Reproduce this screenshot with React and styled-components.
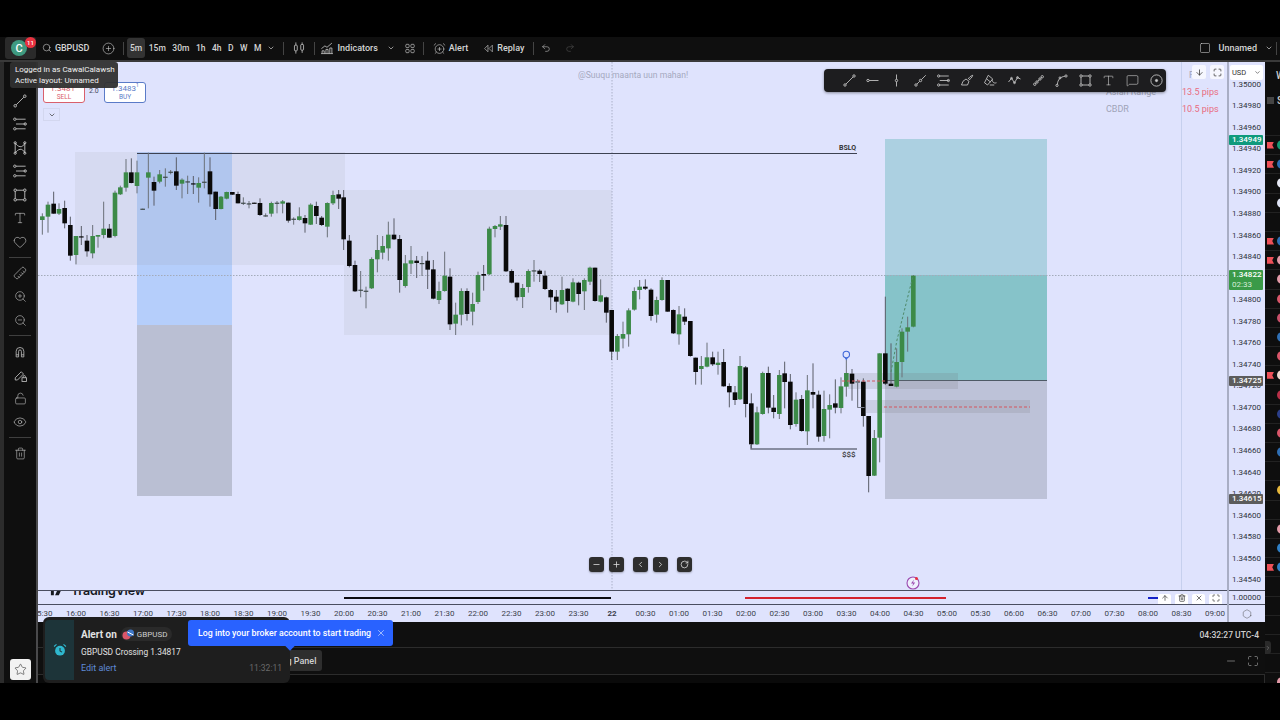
import styled, { createGlobalStyle } from "styled-components";
import {
  AlarmClockPlus,
  ChevronDown,
  ChevronLeft,
  ChevronRight,
  CirclePlus,
  Eye,
  Hexagon,
  Heart,
  LockOpen,
  Maximize,
  Minus,
  MessageSquare,
  Plus,
  Redo2,
  RotateCw,
  Ruler,
  Search,
  Square,
  Star,
  Trash2,
  Type,
  Undo2,
  X,
  ArrowDown,
  ArrowUp,
  ZoomIn,
  ZoomOut,
} from "lucide-react";

// candles read off the picture: [x, bodyTop, bodyBottom, wickTop, wickBottom, colour]
// every chunk is in 3x crop coordinates, with the crop's origin
const chunks = [
  {
    x0: 40,
    y0: 140,
    rows: [
      [7, 229, 240, 220, 284, "g"], [24, 194, 230, 185, 278, "g"], [41, 191, 221, 155, 221, "b"],
      [57, 207, 221, 190, 225, "g"], [74, 204, 250, 182, 265, "b"], [91, 255, 347, 230, 362, "b"],
      [108, 288, 345, 288, 373, "g"], [124, 289, 292, 258, 315, "b"], [141, 302, 334, 285, 350, "b"],
      [158, 288, 340, 255, 355, "g"], [174, 285, 290, 285, 323, "g"], [191, 266, 285, 185, 295, "g"],
      [208, 266, 293, 252, 293, "b"], [225, 158, 288, 152, 292, "g"], [241, 142, 163, 137, 165, "g"],
      [258, 97, 143, 57, 155, "g"], [274, 97, 129, 55, 130, "b"], [291, 97, 138, 62, 160, "g"],
      [308, 206, 208, 206, 208, "n"], [325, 97, 113, 38, 205, "g"], [342, 126, 152, 110, 197, "b"],
      [359, 103, 125, 90, 130, "g"], [376, 110, 112, 85, 140, "n"], [392, 95, 97, 90, 103, "n"],
      [409, 94, 137, 52, 150, "b"], [426, 119, 131, 115, 175, "g"], [443, 124, 126, 107, 162, "n"],
      [460, 130, 133, 108, 162, "b"], [476, 129, 143, 112, 188, "g"], [493, 125, 127, 38, 145, "n"],
      [510, 94, 163, 52, 200, "b"], [527, 155, 207, 155, 240, "b"], [543, 170, 207, 168, 208, "g"],
      [560, 156, 176, 155, 178, "g"], [577, 156, 164, 156, 165, "b"], [594, 162, 190, 155, 190, "b"],
      [610, 188, 190, 172, 195, "n"], [627, 190, 192, 183, 205, "n"], [643, 188, 190, 188, 190, "b"],
      [660, 189, 225, 175, 228, "b"], [677, 226, 228, 220, 230, "n"], [694, 189, 221, 185, 230, "g"],
      [711, 188, 190, 183, 220, "n"], [728, 184, 191, 180, 220, "g"], [745, 188, 242, 188, 248, "b"],
      [761, 236, 238, 232, 254, "n"], [778, 229, 240, 202, 242, "g"], [795, 234, 250, 225, 278, "b"],
      [812, 194, 254, 190, 255, "g"], [829, 198, 228, 185, 252, "b"], [845, 233, 255, 228, 258, "b"],
      [862, 189, 260, 187, 292, "g"], [879, 165, 190, 152, 195, "g"], [896, 163, 176, 150, 207, "b"],
    ],
  },
  {
    x0: 340,
    y0: 180,
    rows: [
      [11, 52, 178, 30, 210, "b"], [28, 182, 258, 165, 262, "b"], [45, 255, 334, 242, 336, "b"],
      [62, 329, 331, 273, 352, "n"], [78, 332, 334, 320, 385, "n"], [95, 237, 325, 232, 327, "g"],
      [112, 210, 238, 165, 277, "g"], [128, 198, 218, 168, 238, "g"], [145, 164, 205, 125, 242, "g"],
      [162, 164, 178, 115, 180, "b"], [179, 177, 300, 165, 338, "b"], [196, 250, 318, 225, 323, "g"],
      [213, 241, 251, 198, 282, "g"], [230, 242, 249, 228, 294, "b"], [246, 249, 251, 228, 288, "n"],
      [263, 242, 269, 215, 327, "b"], [280, 268, 356, 240, 358, "b"], [297, 333, 360, 305, 372, "g"],
      [314, 287, 333, 215, 335, "g"], [330, 290, 433, 265, 450, "b"], [347, 404, 431, 368, 465, "g"],
      [364, 333, 404, 325, 436, "g"], [381, 333, 402, 325, 422, "b"], [398, 372, 395, 338, 436, "g"],
      [414, 285, 366, 275, 372, "g"], [431, 282, 287, 255, 332, "b"], [448, 146, 283, 140, 285, "g"],
      [465, 138, 147, 135, 172, "g"], [481, 133, 140, 108, 150, "g"], [498, 135, 274, 108, 276, "b"],
      [515, 273, 308, 268, 310, "b"], [531, 308, 352, 308, 362, "b"], [548, 324, 351, 312, 384, "g"],
      [565, 273, 321, 268, 338, "g"], [582, 271, 273, 240, 305, "n"], [599, 272, 282, 268, 306, "b"],
      [615, 287, 327, 272, 330, "b"], [632, 330, 352, 327, 390, "b"], [649, 350, 365, 330, 398, "b"],
      [666, 330, 373, 290, 375, "g"], [683, 326, 363, 325, 398, "b"], [699, 307, 365, 295, 367, "g"],
      [716, 308, 342, 305, 376, "b"], [733, 300, 334, 295, 390, "g"], [750, 263, 305, 260, 315, "g"],
      [765, 263, 363, 263, 365, "b"], [782, 346, 365, 298, 367, "g"], [799, 352, 398, 350, 428, "b"],
      [815, 390, 515, 390, 540, "b"], [832, 468, 515, 462, 540, "g"], [849, 462, 476, 425, 505, "g"],
      [866, 391, 463, 385, 500, "g"], [883, 333, 389, 322, 392, "g"], [899, 320, 330, 300, 358, "g"],
      [916, 320, 326, 298, 330, "b"], [933, 329, 408, 325, 422, "b"], [950, 360, 404, 350, 428, "g"],
    ],
  },
  {
    x0: 640,
    y0: 270,
    rows: [
      [66, 30, 90, 22, 92, "g"], [83, 30, 125, 30, 125, "b"], [100, 120, 190, 118, 192, "b"],
      [117, 133, 193, 108, 224, "g"], [134, 140, 155, 115, 165, "b"], [151, 153, 258, 153, 260, "b"],
      [167, 263, 306, 263, 344, "b"], [184, 288, 297, 258, 344, "g"], [201, 262, 290, 218, 292, "g"],
      [218, 262, 283, 245, 288, "b"], [234, 278, 285, 245, 314, "g"], [251, 276, 349, 237, 350, "b"],
      [268, 348, 367, 340, 412, "b"], [285, 367, 390, 348, 405, "b"],
    ],
  },
  {
    x0: 740,
    y0: 260,
    rows: [
      [0, 318, 418, 288, 420, "g"], [17, 322, 432, 318, 472, "b"], [34, 430, 553, 400, 565, "b"],
      [51, 457, 553, 440, 555, "g"], [68, 339, 462, 335, 464, "g"], [85, 339, 443, 320, 460, "b"],
      [101, 443, 456, 405, 475, "b"], [118, 345, 462, 330, 477, "g"], [134, 340, 366, 305, 445, "b"],
      [151, 365, 495, 342, 508, "b"], [168, 419, 492, 397, 500, "g"], [185, 417, 513, 405, 515, "b"],
      [202, 391, 514, 345, 555, "g"], [219, 396, 404, 310, 445, "b"], [236, 404, 530, 392, 545, "b"],
      [252, 447, 528, 392, 545, "g"], [269, 435, 449, 403, 535, "g"], [286, 430, 443, 358, 460, "b"],
      [303, 379, 444, 352, 460, "g"], [319, 339, 380, 300, 410, "g"], [336, 341, 371, 327, 422, "b"],
      [353, 364, 366, 358, 442, "n"], [370, 365, 468, 355, 500, "b"], [386, 468, 648, 468, 697, "b"],
      [403, 534, 647, 510, 648, "g"], [419, 280, 533, 280, 607, "g"], [436, 280, 371, 110, 375, "b"],
      [453, 371, 378, 250, 378, "b"], [470, 306, 380, 265, 382, "g"], [486, 215, 306, 205, 352, "g"],
      [503, 202, 215, 170, 275, "g"], [520, 47, 200, 45, 202, "g"],
    ],
  },
];

const candles = chunks.flatMap(({ x0, y0, rows }) =>
  rows.map(([x, top, bottom, wTop, wBottom, kind]) => ({
    x: x0 + x / 3,
    top: y0 + top / 3,
    bottom: y0 + bottom / 3,
    wTop: y0 + wTop / 3,
    wBottom: y0 + wBottom / 3,
    kind,
  }))
);

const bodyColor = { g: "#3c8a48", b: "#0a0a0a", n: "#3f4a4a" };

// 1.34820 sits fully under the live price tag, its slot stays empty
const prices = [
  "1.35000", "1.34980", "1.34960", "1.34940", "1.34920", "1.34900", "1.34880", "1.34860",
  "1.34840", "", "1.34800", "1.34780", "1.34760", "1.34740", "1.34720", "1.34700",
  "1.34680", "1.34660", "1.34640", "1.34620", "1.34600", "1.34580", "1.34560", "1.34540",
];

const times = [
  "15:30", "16:00", "16:30", "17:00", "17:30", "18:00", "18:30", "19:00", "19:30", "20:00",
  "20:30", "21:00", "21:30", "22:00", "22:30", "23:00", "23:30", "22", "00:30", "01:00",
  "01:30", "02:00", "02:30", "03:00", "03:30", "04:00", "04:30", "05:00", "05:30", "06:00",
  "06:30", "07:00", "07:30", "08:00", "08:30", "09:00",
];

const watchRows = [
  { dot: "#159a74", flag: true }, { dot: "#2f6fb5", flag: true }, { dot: "#e8eaf5" },
  { dot: "#dfe4f5" }, { dot: null }, { dot: "#2f6fb5", flag: true },
  { dot: "#e39aa8", flag: true, active: true }, { dot: "#e39aa8" }, { dot: "#d9566a" },
  { dot: "#c9506a" }, { dot: "#2f6fb5" }, { dot: "#d9566a" },
  { dot: "#f0d8d0", flag: true }, { dot: "#b83048" }, { dot: "#2c3f8a" },
  { dot: "#d9566a" }, { dot: "#2f6fb5" }, { dot: null },
  { dot: "#e8b93c" }, { dot: null }, { dot: "#e39aa8" },
  { dot: "#2f7fc5" }, { dot: "#2f7fc5", flag: true }, { dot: null },
  { dot: null }, { dot: null }, { dot: null },
  { dot: null }, { dot: "#e39aa8" },
];

const GlobalStyle = createGlobalStyle`
  html, body {
    margin: 0;
    padding: 0;
    background: #000;
    font-family: Roboto, "Liberation Sans", sans-serif;
  }
  * {
    box-sizing: border-box;
  }
`;

const Page = styled.div`
  width: 1280px;
  height: 720px;
  background: #000;
  padding: 37px 0;
  display: flex;
  flex-direction: column;
  overflow: hidden;
  position: relative;
`;
const TopBar = styled.header`
  height: 25px;
  flex: none;
  background: #0f0f0f;
  border-bottom: 2px solid #3a3a3a;
  display: flex;
  align-items: center;
  padding: 0 0 1px 5px;
  color: #d4d4d4;
  font-size: 9px;
  font-weight: 500;
`;
const LogoButton = styled.div`
  width: 31px;
  height: 22px;
  background: #2a2a2a;
  border-radius: 3px;
  padding-left: 6px;
  display: flex;
  align-items: center;
  position: relative;
`;
const LogoCircle = styled.div`
  width: 16px;
  height: 16px;
  border-radius: 50%;
  background: #3f9a80;
  color: #fff;
  font-size: 11px;
  display: flex;
  align-items: center;
  justify-content: center;
`;
const Badge = styled.span`
  position: absolute;
  top: 0;
  right: 0;
  width: 11px;
  height: 11px;
  border-radius: 50%;
  background: #e8323f;
  color: #fff;
  font-size: 6px;
  display: flex;
  align-items: center;
  justify-content: center;
`;
const Symbol = styled.div`
  display: flex;
  align-items: center;
  gap: 3px;
  margin-left: 6px;
  width: 53px;
  font-size: 9px;
  letter-spacing: -0.1px;
`;
const IconCell = styled.div`
  width: ${(p) => p.$w || 22}px;
  display: flex;
  align-items: center;
  justify-content: center;
  flex: none;
  color: ${(p) => p.$color || "#cfcfcf"};
`;
const Divider = styled.span`
  width: 1px;
  height: 13px;
  background: #444;
  flex: none;
  margin-left: ${(p) => p.$gap ?? 4}px;
  margin-right: ${(p) => p.$after ?? p.$gap ?? 4}px;
`;
const TimeGroup = styled.div`
  display: flex;
  align-items: center;
  gap: 6.5px;
  font-size: 8.5px;
`;
const TimeButton = styled.span`
  ${(p) =>
    p.$active &&
    `
    background: #333;
    padding: 5px 3px;
    margin-right: -3px;
    border-radius: 3px;
  `}
`;
const TextButton = styled.div`
  display: flex;
  align-items: center;
  gap: 3px;
  margin-left: ${(p) => p.$before || 0}px;
  margin-right: ${(p) => p.$after || 0}px;
  flex: none;
`;
const TopRight = styled.div`
  margin-left: auto;
  display: flex;
  align-items: center;
`;

const Workspace = styled.div`
  flex: 1;
  display: flex;
  min-height: 0;
`;
const LeftBar = styled.aside`
  width: 38px;
  flex: none;
  background: #0f0f0f;
  border-left: 4px solid #2c2c2c;
  border-right: 2px solid #4a4a4c;
  padding-top: 27px;
  display: flex;
  flex-direction: column;
  align-items: center;
  color: #c4c4c4;
  position: relative;
`;
const LeftTool = styled.div`
  height: 23.5px;
  width: 100%;
  flex: none;
  display: flex;
  align-items: center;
  justify-content: center;
`;
const LeftDivider = styled.hr`
  width: 22px;
  border: 0;
  border-top: 1px solid #3f3f3f;
  margin: 3px 0 4px;
  flex: none;
`;
const TiltedRuler = styled(Ruler)`
  transform: rotate(90deg);
`;
const StarButton = styled.div`
  margin-top: auto;
  margin-bottom: 3px;
  width: 21px;
  height: 21px;
  border-radius: 3px;
  background: #f2f2f2;
  color: #333;
  display: flex;
  align-items: center;
  justify-content: center;
`;

const Center = styled.div`
  flex: 1;
  min-width: 0;
  display: flex;
  flex-direction: column;
`;
const ChartRow = styled.div`
  height: 560px;
  flex: none;
  display: flex;
`;
const ChartColumn = styled.div`
  width: 1189px;
  flex: none;
  display: flex;
  flex-direction: column;
  background: #dfe3fd;
`;
const MainPane = styled.div`
  height: 529px;
  flex: none;
  position: relative;
  overflow: hidden;
  border-bottom: 1px solid #4a4e60;
`;
const ChartSvg = styled.svg`
  display: block;
  width: 1189px;
  height: 528px;
`;
const Watermark = styled.div`
  position: absolute;
  top: 8px;
  left: 540px;
  font-size: 8.6px;
  color: #a5a9bf;
`;
const TradeBox = styled.div`
  position: absolute;
  top: 20px;
  left: ${(p) => p.$left}px;
  width: 42px;
  height: 21px;
  background: #fff;
  border: 1px solid ${(p) => p.$color};
  border-radius: 3px;
  color: ${(p) => p.$color};
  font-size: 8px;
  line-height: 9px;
  text-align: center;
  padding-top: 1px;
`;
const TradeSup = styled.sup`
  font-size: 5px;
  line-height: 0;
`;
const TradeSide = styled.div`
  font-size: 6.5px;
  line-height: 9px;
`;
const TradeQty = styled.div`
  position: absolute;
  top: 25px;
  left: 51px;
  font-size: 7px;
  color: #44485c;
`;
const MoreButton = styled.div`
  position: absolute;
  top: 46px;
  left: 5px;
  width: 17px;
  height: 13px;
  border: 1px solid #d3d7ef;
  color: #333;
  display: flex;
  align-items: center;
  justify-content: center;
`;
const LoginTip = styled.div`
  position: absolute;
  top: 62px;
  left: 10px;
  width: 108px;
  height: 26px;
  background: rgba(48, 48, 48, 0.95);
  color: #f0f0f0;
  border-radius: 3px;
  font-size: 8px;
  line-height: 11px;
  padding: 2px 5px;
  white-space: nowrap;
  z-index: 5;
`;
const DrawBar = styled.div`
  position: absolute;
  top: 7px;
  left: 786px;
  width: 342px;
  height: 23px;
  background: #1d1d1f;
  border-radius: 4px;
  box-shadow: 0 1px 3px rgba(0, 0, 0, 0.4);
  display: flex;
  align-items: center;
  padding-left: 13.5px;
  color: #cfcfcf;
  z-index: 3;
`;
const DrawTool = styled.div`
  width: 23.6px;
  flex: none;
  display: flex;
  justify-content: center;
`;
const Legend = styled.div`
  position: absolute;
  top: 21.5px;
  left: 1068px;
  display: grid;
  grid-template-columns: 76px auto;
  grid-auto-rows: 17px;
  align-items: center;
  font-size: 9px;
  color: #a0a4b8;
  white-space: nowrap;
`;
const Pips = styled.span`
  color: #e96c80;
`;
const CornerButton = styled.div`
  position: absolute;
  top: 3px;
  left: ${(p) => p.$left}px;
  width: 14px;
  height: 14px;
  border-radius: 2px;
  background: #f6f7ff;
  color: #333;
  display: flex;
  align-items: center;
  justify-content: center;
  z-index: 4;
`;
const FaintLetter = styled.span`
  position: absolute;
  top: 8px;
  left: 1151px;
  font-size: 9px;
  color: #9ea2b8;
`;
const ZoomBar = styled.div`
  position: absolute;
  top: 495px;
  left: 551px;
  display: flex;
  align-items: center;
  gap: 5px;
`;
const ZoomButton = styled.div`
  width: 15px;
  height: 15px;
  background: #2e2e2e;
  border-radius: 3px;
  color: #e4e4e4;
  display: flex;
  align-items: center;
  justify-content: center;
  margin-right: ${(p) => p.$after || 0}px;
  box-shadow: 0 1px 2px rgba(0, 0, 0, 0.3);
`;
const SubPane = styled.div`
  height: 14px;
  flex: none;
  position: relative;
  overflow: hidden;
  border-bottom: 1px solid #4a4e60;
`;
const Brand = styled.div`
  position: absolute;
  left: 10px;
  top: -9px;
  display: flex;
  align-items: center;
  gap: 8px;
  color: #16181f;
  font-family: Inter, Roboto, sans-serif;
  font-weight: 600;
  font-size: 12.5px;
  line-height: 18px;
  letter-spacing: -0.2px;
`;
const SubBar = styled.div`
  position: absolute;
  top: 5.5px;
  left: ${(p) => p.$left}px;
  width: ${(p) => p.$w}px;
  height: 2px;
  background: ${(p) => p.$color};
`;
const PaneControls = styled.div`
  position: absolute;
  top: 3px;
  left: 1120px;
  display: flex;
  gap: 4px;
  color: #333;
`;
const PaneControl = styled.div`
  width: 13px;
  height: 13px;
  background: #fff;
  border-radius: 2px;
  display: flex;
  align-items: flex-start;
  justify-content: center;
`;
const TimeAxis = styled.div`
  height: 17px;
  flex: none;
  display: flex;
  align-items: center;
  margin-left: -12.25px;
  overflow: hidden;
  font-size: 8px;
  color: #3b3f4c;
`;
const TimeLabel = styled.span`
  width: 33.5px;
  flex: none;
  text-align: center;
  font-weight: ${(p) => (p.$bold ? 700 : 400)};
`;
const PriceColumn = styled.div`
  width: 38px;
  flex: none;
  background: #dfe3fd;
  border-left: 2px solid #a9aec4;
  display: flex;
  flex-direction: column;
  font-size: 8px;
  color: #2f3340;
`;
const PriceMain = styled.div`
  height: 529px;
  flex: none;
  position: relative;
  overflow: hidden;
  padding-top: 11.7px;
  padding-left: 3px;
  border-bottom: 1px solid #4a4e60;
`;
const PriceLine = styled.div`
  height: 21.56px;
  line-height: 21.56px;
`;
const PriceTag = styled.div`
  position: absolute;
  left: 0;
  top: ${(p) => p.$top}px;
  width: 34px;
  background: ${(p) => p.$color};
  color: #fff;
  font-weight: 500;
  line-height: 10px;
  padding-left: 3px;
  border-radius: 1px;
`;
const TagTimer = styled.div`
  color: #d6ecd8;
  font-weight: 400;
  line-height: 10px;
`;
const UsdBox = styled.div`
  position: absolute;
  top: 3px;
  left: 1px;
  width: 33px;
  height: 15px;
  background: #fff;
  border-radius: 2px;
  display: flex;
  align-items: center;
  justify-content: space-between;
  padding: 0 2px;
  font-size: 7.5px;
  color: #333;
`;
const PriceSub = styled.div`
  height: 14px;
  flex: none;
  padding-left: 3px;
  line-height: 13px;
  border-bottom: 1px solid #4a4e60;
`;
const AxisCorner = styled.div`
  height: 17px;
  flex: none;
  display: flex;
  align-items: center;
  justify-content: center;
  color: #444;
`;
const StatusBar = styled.div`
  height: 26px;
  flex: none;
  background: #0f0f0f;
  border-bottom: 1px solid #2c2c2c;
  display: flex;
  align-items: center;
  justify-content: flex-end;
  padding-right: 6px;
  color: #cfcfcf;
  font-size: 8.5px;
  font-weight: 500;
`;
const PanelBar = styled.div`
  height: 26px;
  flex: none;
  background: #0f0f0f;
  display: flex;
  align-items: flex-start;
  padding-top: 2px;
  padding-left: 212px;
  color: #bbb;
`;
const PanelButton = styled.div`
  height: 21px;
  width: 72px;
  border-radius: 3px;
  background: #2e2e2e;
  color: #d0d0d0;
  font-size: 9px;
  font-weight: 500;
  display: flex;
  align-items: center;
  padding-left: 11px;
  white-space: nowrap;
`;
const PanelIcons = styled.div`
  margin-left: auto;
  padding: 5px 6px 0 0;
  display: flex;
  gap: 10px;
`;
const PanelBody = styled.div`
  flex: 1;
  background: #0a0a0a;
  border-top: 1px solid #2c2c2c;
  border-right: 1px solid #2c2c2c;
`;
const Sidebar = styled.aside`
  width: 15px;
  flex: none;
  background: #0e0e0e;
  overflow: hidden;
  font-size: 10px;
  font-weight: 500;
  color: #d0d0d0;
  position: relative;
`;
const CollapseTab = styled.div`
  position: absolute;
  left: 0;
  top: 579px;
  width: 6px;
  height: 13px;
  background: #2a2a2a;
  border-radius: 0 3px 3px 0;
  color: #999;
  display: flex;
  align-items: center;
  justify-content: center;
`;
const SideHead = styled.div`
  height: 74px;
  padding-top: 8px;
  display: flex;
  flex-direction: column;
  gap: 14px;
  border-bottom: 1px solid #222;
`;
const SideTitle = styled.div`
  display: flex;
  align-items: center;
  gap: 3px;
  padding-left: ${(p) => (p.$box ? 2 : 11)}px;
  line-height: 11px;
`;
const SideBox = styled.span`
  width: 7px;
  height: 7px;
  flex: none;
  background: #444;
`;
const WatchRow = styled.div`
  height: 19.2px;
  display: flex;
  align-items: center;
  gap: 3px;
  padding-left: ${(p) => (p.$flag ? 2 : 12)}px;
  border-bottom: 1px solid #222;
`;
const RowFlag = styled.span`
  width: 7px;
  height: 7px;
  flex: none;
  background: #ee5058;
  clip-path: polygon(0 0, 100% 0, 75% 50%, 100% 100%, 0 100%);
`;
const RowDot = styled.span`
  width: 10px;
  height: 10px;
  flex: none;
  border-radius: 50%;
  background: ${(p) => p.$color};
`;
const Toast = styled.div`
  position: absolute;
  left: 43px;
  top: 617px;
  width: 247px;
  height: 66px;
  background: #1e1e1e;
  border-radius: 6px;
  display: flex;
  color: #e2e2e2;
  font-size: 8.4px;
  z-index: 6;
`;
const ToastStrip = styled.div`
  width: 29px;
  margin: 3px 0 3px 2px;
  border-radius: 4px 0 0 4px;
  background: #1d3439;
  display: flex;
  align-items: center;
  justify-content: center;
  flex: none;
`;
const ToastBody = styled.div`
  flex: 1;
  padding: 8px 8px 0 7px;
  display: flex;
  flex-direction: column;
`;
const ToastTitle = styled.div`
  display: flex;
  align-items: center;
  gap: 4px;
  height: 18px;
  font-size: 10px;
  font-weight: 700;
`;
const SymbolChip = styled.span`
  display: flex;
  align-items: center;
  gap: 2px;
  padding: 0 5px 0 1px;
  height: 14px;
  border-radius: 7px;
  background: #2a2a2a;
  font-size: 8px;
  font-weight: 400;
  color: #cfcfcf;
`;
const ToastLine = styled.div`
  margin-top: 1px;
  line-height: 17px;
`;
const ToastFoot = styled.div`
  display: flex;
  justify-content: space-between;
  line-height: 15px;
`;
const EditLink = styled.span`
  color: #5f8bd6;
  font-size: 9px;
`;
const ToastTime = styled.span`
  color: #6a6a6a;
  font-size: 8.5px;
`;
const BrokerTip = styled.div`
  position: absolute;
  left: 188px;
  top: 620px;
  width: 205px;
  height: 26px;
  background: #2962ff;
  border-radius: 3px;
  color: #fff;
  font-size: 8.8px;
  font-weight: 500;
  display: flex;
  align-items: center;
  justify-content: space-between;
  padding: 0 7px 0 10px;
  z-index: 7;
  &:after {
    content: "";
    position: absolute;
    left: 98px;
    bottom: -3px;
    width: 8px;
    height: 8px;
    background: #2962ff;
    transform: rotate(45deg);
    z-index: -1;
  }
`;

const Glyph = ({ size = 16, children }) => (
  <svg width={size} height={size} viewBox="0 0 20 20" fill="none" stroke="currentColor" strokeWidth="1.1">
    {children}
  </svg>
);

const glyphs = {
  line: (
    <>
      <circle cx="4" cy="16" r="1.6" />
      <path d="M5.2 14.8 14.8 5.2" />
      <circle cx="16" cy="4" r="1.6" />
    </>
  ),
  hray: (
    <>
      <circle cx="4" cy="10" r="1.6" />
      <path d="M5.6 10H18" />
    </>
  ),
  vline: (
    <>
      <path d="M10 2v6.4M10 11.6V18" />
      <circle cx="10" cy="10" r="1.6" />
    </>
  ),
  ray: (
    <>
      <circle cx="4" cy="16" r="1.6" />
      <circle cx="10" cy="10" r="1.6" />
      <path d="M5.2 14.8 8.8 11.2M11.2 8.8 17 3" />
    </>
  ),
  fib: (
    <>
      <path d="M5 4h12M5 10h12M5 16h12" />
      <circle cx="3.5" cy="4" r="1.5" />
      <circle cx="16.5" cy="10" r="1.5" />
      <circle cx="3.5" cy="16" r="1.5" />
    </>
  ),
  pattern: (
    <>
      <path d="M4 3.500c3 5 9 8 12 0M4 16.500c3-5 9-8 12 0M4 3.500v13M16 3.500v13" />
      <circle cx="4" cy="3.500" r="1.400" />
      <circle cx="16" cy="3.500" r="1.400" />
      <circle cx="4" cy="16.500" r="1.400" />
      <circle cx="16" cy="16.500" r="1.400" />
    </>
  ),
  rect: (
    <>
      <rect x="4" y="4" width="12" height="12" />
      <circle cx="4" cy="4" r="1.6" fill="#1a1a1a" />
      <circle cx="16" cy="4" r="1.6" fill="#1a1a1a" />
      <circle cx="4" cy="16" r="1.6" fill="#1a1a1a" />
      <circle cx="16" cy="16" r="1.6" fill="#1a1a1a" />
    </>
  ),
  brush: (
    <>
      <path d="M2 16h8l2-5-4-3-4 3z" />
      <path d="M11 8c1-2 3-4 6-5-1 3-3 5-5 6" />
    </>
  ),
  fork: (
    <>
      <path d="M7 3l6 5-7 8-4-3z" />
      <path d="M5 8l5 4M12 9c1 4 3 5 6 4M9 16h6" />
    </>
  ),
  wave: (
    <>
      <path d="M2 12l4-5 4 6 4-7 4 2" />
      <circle cx="6" cy="7" r="1.2" />
      <circle cx="10" cy="13" r="1.2" />
      <circle cx="14" cy="6" r="1.2" />
    </>
  ),
  cross: (
    <>
      <circle cx="5" cy="15" r="1.6" />
      <circle cx="15" cy="5" r="1.6" />
      <circle cx="12" cy="8" r="1.6" />
      <circle cx="8" cy="12" r="1.6" />
      <path d="M6 14l1-1M9 11l2-2M13 7l1-1" />
    </>
  ),
  curve: (
    <>
      <circle cx="4" cy="16.500" r="1.500" />
      <circle cx="16" cy="4" r="1.500" />
      <path d="M4.500 15c.5-6 4-10 10-10.600" />
      <circle cx="8" cy="6.500" r="1.300" />
    </>
  ),
  cursor: (
    <>
      <circle cx="10" cy="10" r="7.500" />
      <circle cx="10" cy="10" r="1.500" fill="currentColor" />
    </>
  ),
  candle: (
    <>
      <rect x="3.500" y="6" width="4" height="8" rx="1" />
      <rect x="12.500" y="5" width="4" height="8" rx="1" />
      <path d="M5.500 2v4M5.500 14v4M14.500 2v3M14.500 13v4" />
    </>
  ),
  indicators: (
    <>
      <path d="M2 11l5-4 3 2 7-6" />
      <path d="M3 18v-4h3v4M8.500 18v-6h3v6M14 18v-8h3v8M1.500 18h17" />
    </>
  ),
  grid: (
    <>
      <rect x="3" y="3" width="5.500" height="5.500" rx="1.500" />
      <rect x="11.500" y="3" width="5.500" height="5.500" rx="1.500" />
      <rect x="3" y="11.500" width="5.500" height="5.500" rx="1.500" />
      <rect x="11.500" y="11.500" width="5.500" height="5.500" rx="1.500" />
    </>
  ),
  replay: (
    <>
      <path d="M9 4l-6 6 6 6z" />
      <path d="M17 4l-6 6 6 6z" />
    </>
  ),
  magnet: (
    <>
      <path d="M4.500 17V9a5.500 5.500 0 0 1 11 0v8h-3.500V9a2 2 0 0 0-4 0v8z" />
      <path d="M4.500 14h3.500M12 14h3.500" />
    </>
  ),
  pencilLock: (
    <>
      <path d="M3 13l8-8 3 3-8 8H3z" />
      <rect x="12" y="13" width="6" height="5" />
      <path d="M13.500 13v-1.500a1.500 1.500 0 0 1 3 0V13" />
    </>
  ),
};

const drawTools = ["line", "hray", "vline", "ray", "fib", "brush", "fork", "wave", "cross", "curve", "rect"];

const Candles = () =>
  candles.map((c, i) => (
    <g key={i}>
      <line x1={c.x} x2={c.x} y1={c.wTop} y2={c.wBottom} stroke={c.kind === "b" ? "#5a5d68" : "#6a7078"} strokeWidth="1" />
      <rect
        x={c.x - 2.3}
        y={c.top}
        width="4.6"
        height={Math.max(c.bottom - c.top, 1.2)}
        fill={bodyColor[c.kind]}
      />
    </g>
  ));

const ChartDrawing = () => (
  <ChartSvg viewBox="38 62 1189 528">
    <rect x="75" y="152" width="270" height="113" fill="#d6daf1" />
    <rect x="344" y="190" width="268" height="145" fill="#d6daf1" />
    <rect x="137" y="152" width="95" height="113" fill="#b1c6ee" />
    <rect x="137" y="265" width="95" height="60" fill="#b5cefb" />
    <rect x="137" y="325" width="95" height="171" fill="#babfd3" />
    <rect x="885" y="139" width="162" height="136" fill="#acd0e1" />
    <rect x="885" y="275" width="162" height="106" fill="#86c3c9" />
    <rect x="885" y="381" width="162" height="118" fill="#bdc2d8" />
    <line x1="885" x2="1047" y1="380.500" y2="380.500" stroke="#4e5a66" strokeWidth="1" />
    <rect x="848" y="373" width="110" height="16" fill="#73747c" fillOpacity="0.18" />
    <rect x="866" y="400" width="164" height="13" fill="#73747c" fillOpacity="0.18" />
    <line x1="1181.500" x2="1181.500" y1="62" y2="590" stroke="#c6d0ee" />
    <line x1="612" x2="612" y1="62" y2="590" stroke="#aab0c8" strokeDasharray="1.500 1.500" />
    <line x1="38" x2="1227" y1="275.500" y2="275.500" stroke="#a3abba" strokeDasharray="1.500 1.500" />
    <line x1="137" x2="857" y1="153.500" y2="153.500" stroke="#3d4252" />
    <text x="839" y="150" fontSize="7" fontWeight="700" fill="#333">BSLQ</text>
    <path d="M751 445v4h106" fill="none" stroke="#6c7182" strokeWidth="1.300" />
    <text x="842" y="457" fontSize="8" fontWeight="500" fill="#333">$$$</text>
    <Candles />
    <path d="M842 381h43" stroke="#d4565f" strokeDasharray="3 2" />
    <path d="M884 407h146" stroke="#d4565f" strokeDasharray="3 2" />
    <path d="M857.500 381v26.500h7" fill="none" stroke="#777c8a" />
    <path d="M891 372 897 340 913 276" fill="none" stroke="#4f8a6a" strokeDasharray="2.500 2" />
    <circle cx="846.300" cy="354.500" r="3.200" fill="#dfe3fd" stroke="#3f67d8" strokeWidth="1.100" />
    <path d="M844.800 358h3l-1.500 2.500z" fill="#3f67d8" />
    <circle cx="913" cy="583" r="6" fill="#eef0fd" stroke="#9c4bb0" strokeWidth="1.100" />
    <path d="M914 579.500l-3 4h2.200l-1 3 3-4h-2.200z" fill="#9c4bb0" />
    <circle cx="916.500" cy="578.500" r="1.500" fill="#e8323f" />
  </ChartSvg>
);

export default function App() {
  return (
    <Page>
      <GlobalStyle />
      <TopBar>
        <LogoButton>
          <LogoCircle>C</LogoCircle>
          <Badge>11</Badge>
        </LogoButton>
        <Symbol>
          <Search size={10} strokeWidth={1.4} />
          GBPUSD
        </Symbol>
        <IconCell $w={27}>
          <CirclePlus size={13} strokeWidth={1.1} />
        </IconCell>
        <Divider $gap={1} $after={3} />
        <TimeGroup>
          <TimeButton $active>5m</TimeButton>
          <TimeButton>15m</TimeButton>
          <TimeButton>30m</TimeButton>
          <TimeButton>1h</TimeButton>
          <TimeButton>4h</TimeButton>
          <TimeButton>D</TimeButton>
          <TimeButton>W</TimeButton>
          <TimeButton>M</TimeButton>
        </TimeGroup>
        <IconCell $w={19}>
          <ChevronDown size={8} />
        </IconCell>
        <Divider $gap={2} />
        <IconCell $w={26}>
          <Glyph size={14}>{glyphs.candle}</Glyph>
        </IconCell>
        <Divider $gap={2} />
        <IconCell $w={21}>
          <Glyph size={14}>{glyphs.indicators}</Glyph>
        </IconCell>
        <TextButton>Indicators</TextButton>
        <IconCell $w={26}>
          <ChevronDown size={8} />
        </IconCell>
        <IconCell $w={12}>
          <Glyph size={13}>{glyphs.grid}</Glyph>
        </IconCell>
        <Divider $gap={7} $after={9} />
        <TextButton>
          <AlarmClockPlus size={13} strokeWidth={1.1} />
          Alert
        </TextButton>
        <TextButton $before={15} $after={9}>
          <Glyph size={11}>{glyphs.replay}</Glyph>
          Replay
        </TextButton>
        <Divider $gap={0} />
        <IconCell $w={24}>
          <Undo2 size={10} strokeWidth={1.3} />
        </IconCell>
        <IconCell $w={24} $color="#555">
          <Redo2 size={10} strokeWidth={1.3} />
        </IconCell>
        <TopRight>
          <Square size={12} strokeWidth={1.1} />
          <TextButton $before={8} $after={8}>Unnamed</TextButton>
          <ChevronDown size={8} />
          <Divider $gap={3} />
        </TopRight>
      </TopBar>
      <Workspace>
        <LeftBar>
          <LeftTool><Glyph>{glyphs.line}</Glyph></LeftTool>
          <LeftTool><Glyph>{glyphs.fib}</Glyph></LeftTool>
          <LeftTool><Glyph>{glyphs.pattern}</Glyph></LeftTool>
          <LeftTool><Glyph>{glyphs.fib}</Glyph></LeftTool>
          <LeftTool><Glyph>{glyphs.rect}</Glyph></LeftTool>
          <LeftTool><Type size={14} strokeWidth={1.1} /></LeftTool>
          <LeftTool><Heart size={14} strokeWidth={1.1} /></LeftTool>
          <LeftDivider />
          <LeftTool><TiltedRuler size={14} strokeWidth={1.1} /></LeftTool>
          <LeftTool><ZoomIn size={13} strokeWidth={1.1} /></LeftTool>
          <LeftTool><ZoomOut size={13} strokeWidth={1.1} /></LeftTool>
          <LeftDivider />
          <LeftTool><Glyph size={14}>{glyphs.magnet}</Glyph></LeftTool>
          <LeftTool><Glyph size={15}>{glyphs.pencilLock}</Glyph></LeftTool>
          <LeftTool><LockOpen size={13} strokeWidth={1.1} /></LeftTool>
          <LeftTool><Eye size={14} strokeWidth={1.1} /></LeftTool>
          <LeftDivider />
          <LeftTool><Trash2 size={13} strokeWidth={1.1} /></LeftTool>
          <StarButton>
            <Star size={13} strokeWidth={1.1} />
          </StarButton>
        </LeftBar>
        <Center>
          <ChartRow>
            <ChartColumn>
              <MainPane>
                <ChartDrawing />
                <Watermark>@Suuqu maanta uun mahan!</Watermark>
                <TradeBox $left={5} $color="#d9606c">
                  1.3481<TradeSup>1</TradeSup>
                  <TradeSide>SELL</TradeSide>
                </TradeBox>
                <TradeQty>2.0</TradeQty>
                <TradeBox $left={66} $color="#5a7bc8">
                  1.3483<TradeSup>1</TradeSup>
                  <TradeSide>BUY</TradeSide>
                </TradeBox>
                <MoreButton>
                  <ChevronDown size={8} />
                </MoreButton>
                <DrawBar>
                  {drawTools.map((name, i) => (
                    <DrawTool key={i}>
                      <Glyph size={15}>{glyphs[name]}</Glyph>
                    </DrawTool>
                  ))}
                  <DrawTool><Type size={13} strokeWidth={1.1} /></DrawTool>
                  <DrawTool><MessageSquare size={13} strokeWidth={1.1} /></DrawTool>
                  <DrawTool><Glyph size={15}>{glyphs.cursor}</Glyph></DrawTool>
                </DrawBar>
                <FaintLetter>F</FaintLetter>
                <Legend>
                  <span>Asian Range</span>
                  <Pips>13.5 pips</Pips>
                  <span>CBDR</span>
                  <Pips>10.5 pips</Pips>
                </Legend>
                <CornerButton $left={1154}><ArrowDown size={9} /></CornerButton>
                <CornerButton $left={1172}><Maximize size={9} /></CornerButton>
                <ZoomBar>
                  <ZoomButton><Minus size={9} /></ZoomButton>
                  <ZoomButton $after={4}><Plus size={9} /></ZoomButton>
                  <ZoomButton><ChevronLeft size={9} /></ZoomButton>
                  <ZoomButton $after={4}><ChevronRight size={9} /></ZoomButton>
                  <ZoomButton><RotateCw size={9} /></ZoomButton>
                </ZoomBar>
              </MainPane>
              <SubPane>
                <Brand>
                  <svg width="15" height="9" viewBox="0 0 36 18">
                    <path d="M0 0h14v18H7V7H0zM17 18l8-18h9l-8 18z" fill="#16181f" />
                    <circle cx="20" cy="4" r="3.600" fill="#16181f" />
                  </svg>
                  TradingView
                </Brand>
                <SubBar $left={306} $w={267} $color="#0c0c10" />
                <SubBar $left={707} $w={201} $color="#d3222e" />
                <SubBar $left={1110} $w={10} $color="#1422c8" />
                <PaneControls>
                  <PaneControl><ArrowUp size={8} /></PaneControl>
                  <PaneControl><Trash2 size={8} /></PaneControl>
                  <PaneControl><X size={8} /></PaneControl>
                  <PaneControl><Maximize size={8} /></PaneControl>
                </PaneControls>
              </SubPane>
              <TimeAxis>
                {times.map((t) => (
                  <TimeLabel key={t} $bold={t === "22"}>
                    {t}
                  </TimeLabel>
                ))}
              </TimeAxis>
            </ChartColumn>
            <PriceColumn>
              <PriceMain>
                {prices.map((p, i) => (
                  <PriceLine key={i}>{p}</PriceLine>
                ))}
                <PriceTag $top={73} $color="#0f9a7c">1.34949</PriceTag>
                <PriceTag $top={208} $color="#3a9a48">
                  1.34822
                  <TagTimer>02:33</TagTimer>
                </PriceTag>
                <PriceTag $top={314} $color="#5c5c5c">1.34725</PriceTag>
                <PriceTag $top={432} $color="#5c5c5c">1.34615</PriceTag>
                <UsdBox>
                  USD
                  <ChevronDown size={7} />
                </UsdBox>
              </PriceMain>
              <PriceSub>1.00000</PriceSub>
              <AxisCorner>
                <Hexagon size={10} strokeWidth={1.1} />
              </AxisCorner>
            </PriceColumn>
          </ChartRow>
          <StatusBar>04:32:27 UTC-4</StatusBar>
          <PanelBar>
            <PanelButton>Trading Panel</PanelButton>
            <PanelIcons>
              <Minus size={12} strokeWidth={1.1} />
              <Maximize size={12} strokeWidth={1.1} />
            </PanelIcons>
          </PanelBar>
          <PanelBody />
        </Center>
        <Sidebar>
          <SideHead>
            <SideTitle>W</SideTitle>
            <SideTitle $box>
              <SideBox />S
            </SideTitle>
          </SideHead>
          {watchRows.map((row, i) => (
            <WatchRow key={i} $flag={row.flag}>
              {row.flag && <RowFlag />}
              {row.dot && <RowDot $color={row.dot} />}
            </WatchRow>
          ))}
          <CollapseTab>
            <ChevronRight size={6} />
          </CollapseTab>
        </Sidebar>
      </Workspace>

      <LoginTip>
        Logged in as CawalCalawsh
        <br />
        Active layout: Unnamed
      </LoginTip>
      <Toast>
        <ToastStrip>
          <svg width="14" height="14" viewBox="0 0 20 20">
            <circle cx="10" cy="11" r="7" fill="#2fb8cf" />
            <path d="M10 7v4.500l3 1.500" fill="none" stroke="#1d3439" strokeWidth="1.500" />
            <path d="M1.500 5 5 2M18.500 5 15 2" stroke="#2fb8cf" strokeWidth="1.500" />
          </svg>
        </ToastStrip>
        <ToastBody>
          <ToastTitle>
            Alert on
            <SymbolChip>
              <svg width="13" height="11" viewBox="0 0 26 22">
                <circle cx="9" cy="13" r="8" fill="#d9566a" />
                <circle cx="17" cy="8" r="7" fill="#3f78c8" />
                <path d="M11 6l12 6" stroke="#fff" strokeWidth="2" />
              </svg>
              GBPUSD
            </SymbolChip>
          </ToastTitle>
          <ToastLine>GBPUSD Crossing 1.34817</ToastLine>
          <ToastFoot>
            <EditLink>Edit alert</EditLink>
            <ToastTime>11:32:11</ToastTime>
          </ToastFoot>
        </ToastBody>
      </Toast>
      <BrokerTip>
        Log into your broker account to start trading
        <X size={10} strokeWidth={1.3} />
      </BrokerTip>
    </Page>
  );
}
